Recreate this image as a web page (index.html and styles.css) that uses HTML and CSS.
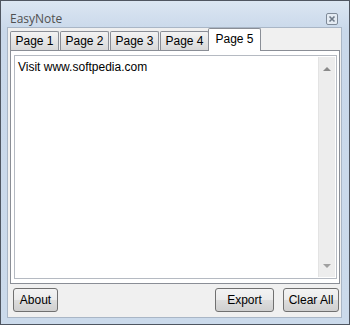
FILE: index.html
```html
<!DOCTYPE html>
<html lang="en">
<head>
    <meta charset="UTF-8">
    <title>EasyNote</title>
    <link rel="stylesheet" href="styles.css">
</head>
<body>
    <div class="window">
        <div class="titlebar">
            <span class="title">EasyNote</span>
            <span class="close-btn">
                <svg width="12" height="12" viewBox="0 0 12 12">
                    <rect x="0.5" y="0.5" width="11" height="11" rx="1.5" fill="#e4ebf3" stroke="#7f8a98"/>
                    <path d="M3.5 3.5 L8.5 8.5 M8.5 3.5 L3.5 8.5" stroke="#6f7a88" stroke-width="1.6"/>
                </svg>
            </span>
        </div>
        <div class="client">
            <div class="tabs">
                <div class="tab">Page 1</div>
                <div class="tab">Page 2</div>
                <div class="tab">Page 3</div>
                <div class="tab">Page 4</div>
                <div class="tab selected">Page 5</div>
            </div>
            <div class="panel">
                <div class="editor">
                    <div class="editor-text">Visit www.softpedia.com</div>
                    <div class="scrollbar">
                        <span class="arrow up"></span>
                        <span class="arrow down"></span>
                    </div>
                </div>
            </div>
            <div class="buttons">
                <button class="btn about">About</button>
                <span class="spacer"></span>
                <button class="btn export">Export</button>
                <button class="btn clear">Clear All</button>
            </div>
        </div>
    </div>
</body>
</html>
```

FILE: styles.css
```css
* {
    box-sizing: border-box;
}
body {
    margin: 0;
    font-family: "Liberation Sans", Arial, sans-serif;
    font-size: 12px;
    color: #000;
}
.window {
    width: 350px;
    height: 325px;
    border: 1px solid #4f5661;
    background: linear-gradient(#dbe6f2, #c9d8ea 30px, #cbdaeb);
    padding: 0 7px 6px 6px;
    display: flex;
    flex-direction: column;
}
.titlebar {
    height: 26px;
    display: flex;
    align-items: flex-end;
    justify-content: space-between;
    padding: 0 4px 0 3px;
}
.title {
    font-family: "Open Sans", sans-serif;
    font-size: 12px;
    line-height: 16px;
    color: #505050;
}
.close-btn {
    width: 12px;
    height: 12px;
    margin-bottom: 2px;
    display: flex;
}
.client {
    flex: 1;
    background: #f0f0f0;
    border: 1px solid #a9b6c6;
    display: flex;
    flex-direction: column;
    padding-bottom: 5px;
}
.tabs {
    height: 22px;
    display: flex;
    align-items: flex-end;
    padding-left: 2px;
}
.tab {
    width: 49px;
    height: 19px;
    margin-right: 1px;
    border: 1px solid #8a8e96;
    border-bottom: none;
    border-radius: 2px 2px 0 0;
    background: linear-gradient(#f3f3f3, #e6e6e6 50%, #d8d8d8);
    text-align: center;
    line-height: 18px;
}
.tab.selected {
    position: relative;
    z-index: 1;
    width: 53px;
    height: 23px;
    margin: 0 0 -1px -2px;
    background: #fff;
    line-height: 20px;
}
.panel {
    height: 234px;
    margin: 0 1px 0 2px;
    border: 1px solid #8a8e96;
    background: #fff;
    padding: 4px 2px 4px 3px;
    display: flex;
}
.editor {
    flex: 1;
    border: 1px solid #b5bac2;
    display: flex;
}
.editor-text {
    flex: 1;
    padding: 4px 3px;
    line-height: 14px;
}
.scrollbar {
    width: 17px;
    margin: 1px 1px 1px 0;
    background: #ededed;
    border-left: 1px solid #e3e3e3;
    display: flex;
    flex-direction: column;
    justify-content: space-between;
    align-items: center;
    padding: 10px 0 9px;
}
.arrow {
    width: 0;
    height: 0;
    border-left: 4px solid transparent;
    border-right: 4px solid transparent;
}
.arrow.up {
    border-bottom: 4px solid #8a8a8a;
}
.arrow.down {
    border-top: 4px solid #a0a0a0;
}
.buttons {
    display: flex;
    margin-top: 4px;
    padding: 0 2px 0 5px;
    gap: 9px;
}
.spacer {
    flex: 1;
}
.btn {
    height: 24px;
    padding: 0;
    font-family: "Liberation Sans", Arial, sans-serif;
    font-size: 12px;
    color: #000;
    border: 1px solid #707070;
    border-radius: 3px;
    background: linear-gradient(#f3f3f3, #ebebeb 50%, #dddddd 51%, #cfcfcf);
}
.about {
    width: 45px;
}
.export {
    width: 59px;
}
.clear {
    width: 56px;
}
```
